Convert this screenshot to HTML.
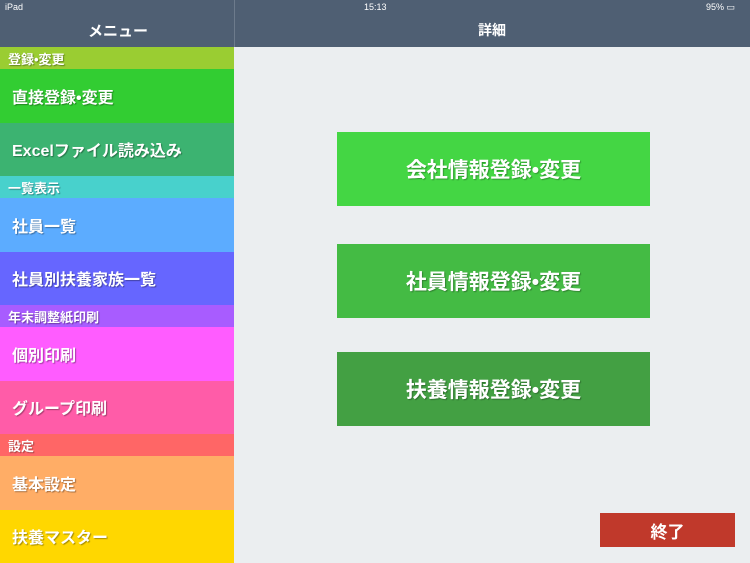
<!DOCTYPE html><html><head><meta charset="utf-8"><style>
*{margin:0;padding:0;box-sizing:border-box}
body{width:750px;height:562px;overflow:hidden;background:#ebeef0;font-family:"Liberation Sans","Noto Sans CJK JP",sans-serif;position:relative}
.hdr{position:absolute;left:0;top:0;width:750px;height:47px;background:#4f5f73;color:#fff}
.div{position:absolute;left:234px;top:0;width:1px;height:47px;background:#6d7b8c}
.st{position:absolute;top:2px;font-size:9px}
.t{position:absolute;top:20px;font-size:15px;font-weight:bold}
.side{position:absolute;left:0;top:47px;width:234px}
.side div{color:#fff;text-shadow:1px 1px 1px rgba(0,0,0,.35);padding-left:12px;display:flex;align-items:center;font-weight:bold}
.h{height:22px;font-size:13px;padding-left:8px!important}
.i{height:53.5px;font-size:16px}
.b{position:absolute;left:337px;width:313px;height:74px;color:#fff;font-size:21px;font-weight:bold;display:flex;align-items:center;justify-content:center;text-shadow:1px 1px 1px rgba(0,0,0,.3)}
</style></head><body>
<div class="hdr"><span class="st" style="left:5px">iPad</span><span class="st" style="left:364px">15:13</span><span class="st" style="left:706px">95% ▭</span>
<span class="t" style="left:88px">メニュー</span><span class="t" style="left:478px;font-size:14px">詳細</span></div>
<div class="div"></div>
<div class="side">
<div class="h" style="background:#9acd32">登録•変更</div>
<div class="i" style="background:#32cd32">直接登録•変更</div>
<div class="i" style="background:#3cb371">Excelファイル読み込み</div>
<div class="h" style="background:#48d1cc">一覧表示</div>
<div class="i" style="background:#5cacff">社員一覧</div>
<div class="i" style="background:#6666ff">社員別扶養家族一覧</div>
<div class="h" style="background:#a85cff">年末調整紙印刷</div>
<div class="i" style="background:#ff5cff">個別印刷</div>
<div class="i" style="background:#ff5ca8">グループ印刷</div>
<div class="h" style="background:#ff6666">設定</div>
<div class="i" style="background:#ffad66">基本設定</div>
<div class="i" style="background:#ffd700">扶養マスター</div>
</div>
<div class="b" style="top:132px;background:#44d644">会社情報登録•変更</div>
<div class="b" style="top:244px;background:#44bb44">社員情報登録•変更</div>
<div class="b" style="top:352px;background:#43a043">扶養情報登録•変更</div>
<div style="position:absolute;left:600px;top:513px;width:135px;height:34px;background:#c0392b;color:#fff;font-size:17px;font-weight:bold;display:flex;align-items:center;justify-content:center">終了</div>
</body></html>
